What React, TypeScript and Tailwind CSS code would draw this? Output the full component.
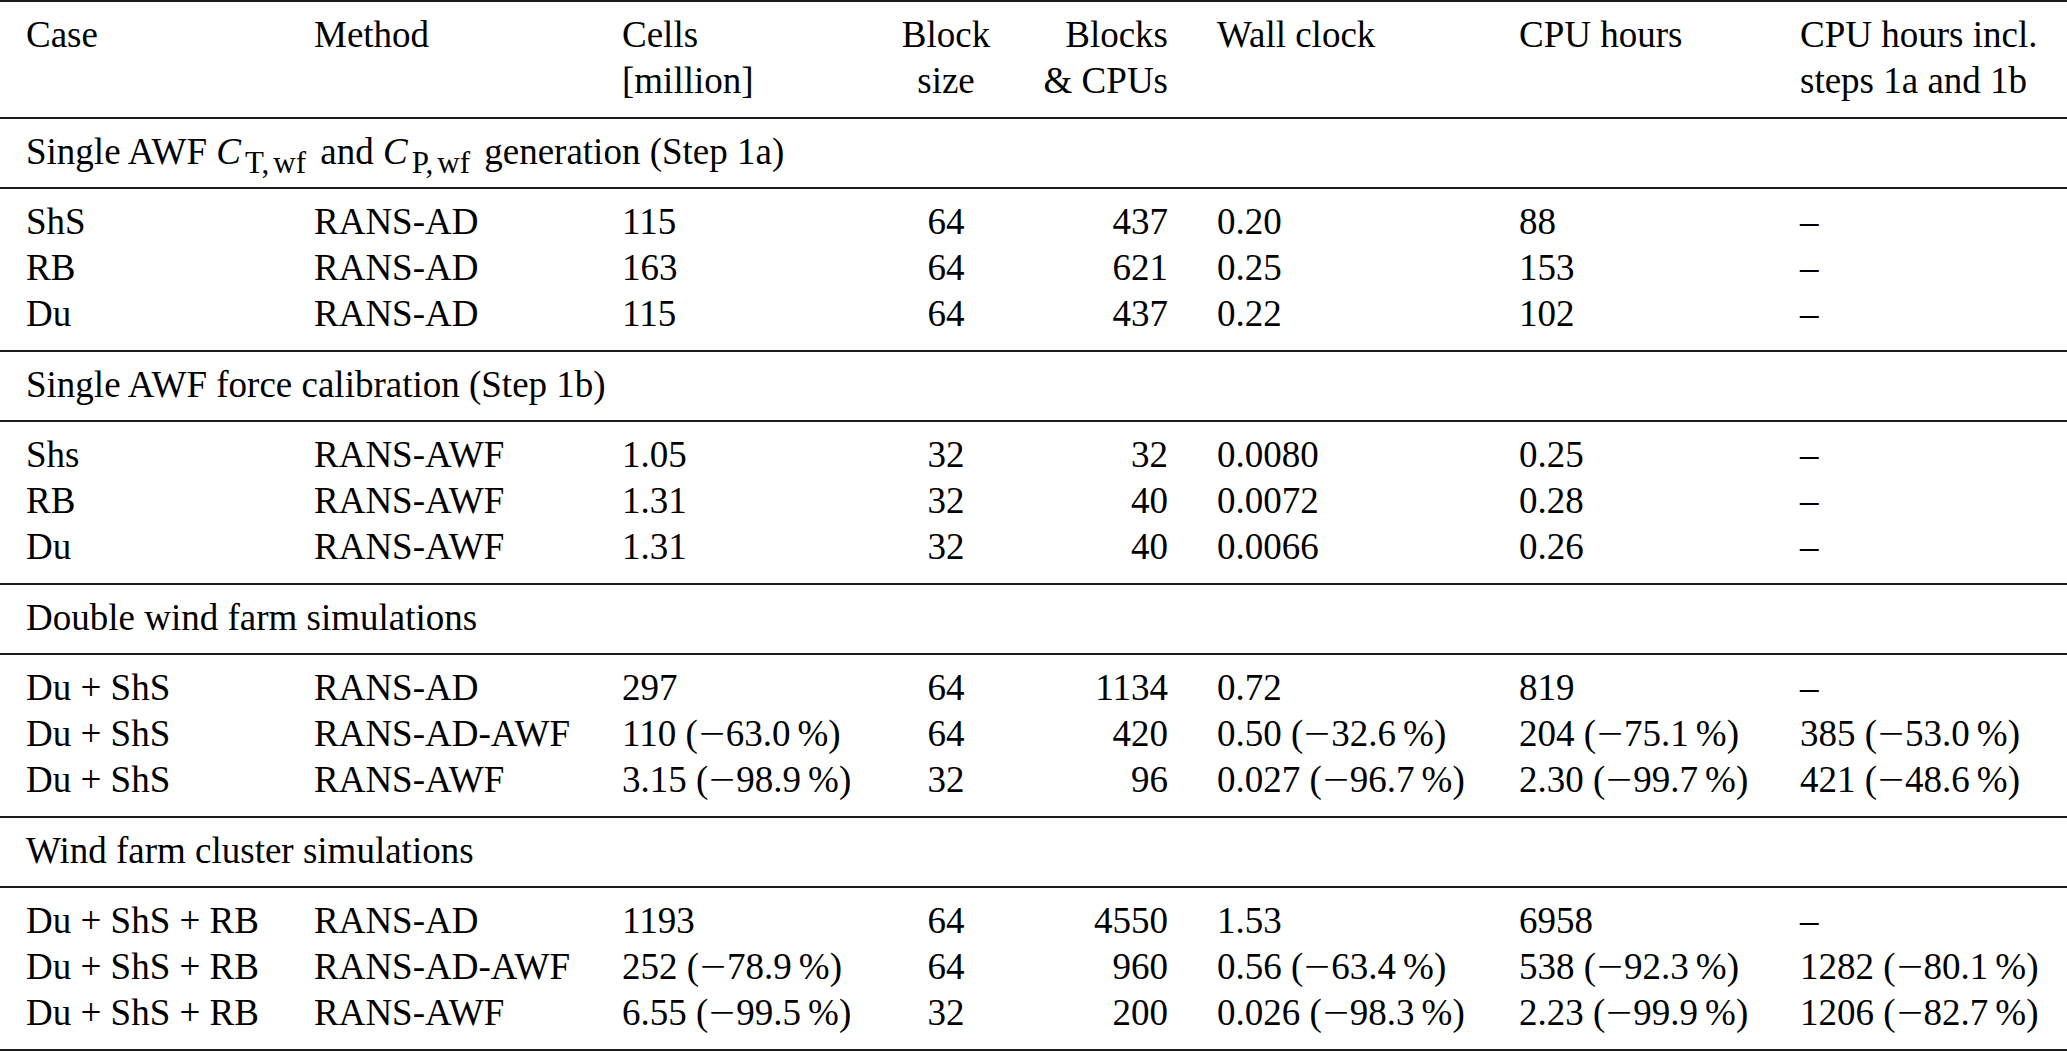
import React from "react";

type Row = string[];

const GRID =
  "grid grid-cols-[288px_308px_278px_92px_176px_351px_281px_1fr] pl-[26px]";

function Val({ v }: { v: string }) {
  const m = v.match(/^(\S+) \(−([\d.]+) %\)$/);
  if (!m) return <>{v}</>;
  return (
    <>
      {m[1]} (
      <span className="inline-block w-[28px] text-center scale-x-[1.25]">−</span>
      {m[2]}
      <span className="ml-[7px]">%</span>)
    </>
  );
}

function Sub({ children }: { children: React.ReactNode }) {
  return (
    <span className="text-[31px] leading-[0] align-[-9px] mr-[5px]">
      {children}
    </span>
  );
}

const sections: { title: React.ReactNode; rows: Row[] }[] = [
  {
    title: (
      <>
        Single AWF <span className="italic mr-[4px]">C</span>
        <Sub>
          T,<span className="ml-[4px]">wf</span>
        </Sub>{" "}
        and <span className="italic mr-[4px]">C</span>
        <Sub>
          P,<span className="ml-[4px]">wf</span>
        </Sub>{" "}
        generation (Step 1a)
      </>
    ),
    rows: [
      ["ShS", "RANS-AD", "115", "64", "437", "0.20", "88", "–"],
      ["RB", "RANS-AD", "163", "64", "621", "0.25", "153", "–"],
      ["Du", "RANS-AD", "115", "64", "437", "0.22", "102", "–"],
    ],
  },
  {
    title: "Single AWF force calibration (Step 1b)",
    rows: [
      ["Shs", "RANS-AWF", "1.05", "32", "32", "0.0080", "0.25", "–"],
      ["RB", "RANS-AWF", "1.31", "32", "40", "0.0072", "0.28", "–"],
      ["Du", "RANS-AWF", "1.31", "32", "40", "0.0066", "0.26", "–"],
    ],
  },
  {
    title: "Double wind farm simulations",
    rows: [
      ["Du + ShS", "RANS-AD", "297", "64", "1134", "0.72", "819", "–"],
      [
        "Du + ShS",
        "RANS-AD-AWF",
        "110 (−63.0 %)",
        "64",
        "420",
        "0.50 (−32.6 %)",
        "204 (−75.1 %)",
        "385 (−53.0 %)",
      ],
      [
        "Du + ShS",
        "RANS-AWF",
        "3.15 (−98.9 %)",
        "32",
        "96",
        "0.027 (−96.7 %)",
        "2.30 (−99.7 %)",
        "421 (−48.6 %)",
      ],
    ],
  },
  {
    title: "Wind farm cluster simulations",
    rows: [
      ["Du + ShS + RB", "RANS-AD", "1193", "64", "4550", "1.53", "6958", "–"],
      [
        "Du + ShS + RB",
        "RANS-AD-AWF",
        "252 (−78.9 %)",
        "64",
        "960",
        "0.56 (−63.4 %)",
        "538 (−92.3 %)",
        "1282 (−80.1 %)",
      ],
      [
        "Du + ShS + RB",
        "RANS-AWF",
        "6.55 (−99.5 %)",
        "32",
        "200",
        "0.026 (−98.3 %)",
        "2.23 (−99.9 %)",
        "1206 (−82.7 %)",
      ],
    ],
  },
];

function DataRow({ r }: { r: Row }) {
  return (
    <div className={GRID}>
      <div className="whitespace-nowrap">{r[0]}</div>
      <div className="whitespace-nowrap">{r[1]}</div>
      <div className="whitespace-nowrap">
        <Val v={r[2]} />
      </div>
      <div className="whitespace-nowrap text-center">{r[3]}</div>
      <div className="whitespace-nowrap text-right">{r[4]}</div>
      <div className="whitespace-nowrap pl-[49px]">
        <Val v={r[5]} />
      </div>
      <div className="whitespace-nowrap">
        <Val v={r[6]} />
      </div>
      <div className="whitespace-nowrap">
        <Val v={r[7]} />
      </div>
    </div>
  );
}

export default function App() {
  return (
    <div className="w-[2067px] h-[1051px] overflow-hidden bg-white text-black [font-family:'Liberation_Serif','Times_New_Roman',serif] text-[37px] leading-[46px]">
      <div className="border-t-2 border-b-2 border-[#1c1c1c] pt-[10px] pb-[12.5px]">
        <div className={GRID}>
          <div>Case</div>
          <div>Method</div>
          <div>
            <div>Cells</div>
            <div>[million]</div>
          </div>
          <div className="text-center">
            <div>Block</div>
            <div>size</div>
          </div>
          <div className="text-right">
            <div>Blocks</div>
            <div>&amp; CPUs</div>
          </div>
          <div className="pl-[49px]">Wall clock</div>
          <div>CPU hours</div>
          <div className="whitespace-nowrap">
            <div>CPU hours incl.</div>
            <div>steps 1a and 1b</div>
          </div>
        </div>
      </div>
      {sections.map((s, i) => (
        <div key={i}>
          <div className="border-b-2 border-[#1c1c1c] pl-[26px] pt-[10px] pb-[12.5px] whitespace-nowrap">
            {s.title}
          </div>
          <div className="border-b-2 border-[#1c1c1c] pt-[10px] pb-[12.5px]">
            {s.rows.map((r, j) => (
              <DataRow key={j} r={r} />
            ))}
          </div>
        </div>
      ))}
    </div>
  );
}
